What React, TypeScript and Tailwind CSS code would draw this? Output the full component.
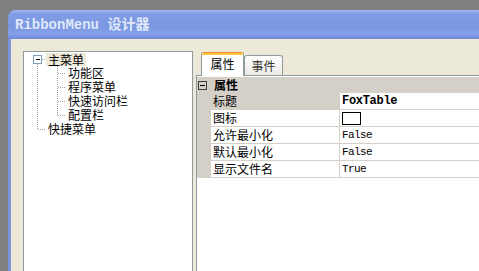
import React from "react";

const cjk = { fontFamily: '"Noto Sans CJK SC", "Noto Sans CJK JP", sans-serif' };
const mono = { fontFamily: '"Liberation Mono", "Noto Sans CJK SC", monospace' };

const DOT = "#a0a0a0";

// dotted connector drawn for one 14px tree row
const Connector = ({
  width,
  lines,
}: {
  width: number;
  lines: { x1: number; y1: number; x2: number; y2: number }[];
}) => (
  <svg width={width} height={14} className="shrink-0" shapeRendering="crispEdges">
    {lines.map((l, i) => (
      <line
        key={i}
        x1={l.x1}
        y1={l.y1}
        x2={l.x2}
        y2={l.y2}
        stroke={DOT}
        strokeWidth={1}
        strokeDasharray="1 1"
      />
    ))}
  </svg>
);

const children = ["功能区", "程序菜单", "快速访问栏", "配置栏"];

const TreePanel = () => (
  <div className="w-[170px] h-[240px] shrink-0 border border-[#919b9c] bg-white text-[12px] leading-[14px] text-black" style={cjk}>
    <div className="flex items-center h-[14px]">
      <svg width={22} height={14} className="shrink-0" shapeRendering="crispEdges">
        <rect x={9.5} y={3.5} width={8} height={8} fill="#fff" stroke="#7f9db9" />
        <line x1={11.5} y1={7.5} x2={15.5} y2={7.5} stroke="#000" />
        <line x1={18} y1={7.5} x2={22} y2={7.5} stroke={DOT} strokeDasharray="1 1" />
        <line x1={13.5} y1={12} x2={13.5} y2={14} stroke={DOT} strokeDasharray="1 1" />
      </svg>
      <span className="px-[2px] h-[13px] bg-[#ece9d8]">主菜单</span>
    </div>
    {children.map((name, i) => {
      const last = i === children.length - 1;
      return (
        <div key={name} className="flex items-center h-[14px]">
          <Connector
            width={42}
            lines={[
              { x1: 13.5, y1: 0, x2: 13.5, y2: 14 },
              { x1: 33.5, y1: 0, x2: 33.5, y2: last ? 7.5 : 14 },
              { x1: 34, y1: 7.5, x2: 42, y2: 7.5 },
            ]}
          />
          <span className="px-[2px]">{name}</span>
        </div>
      );
    })}
    <div className="flex items-center h-[14px]">
      <Connector
        width={22}
        lines={[
          { x1: 13.5, y1: 0, x2: 13.5, y2: 7.5 },
          { x1: 14, y1: 7.5, x2: 22, y2: 7.5 },
        ]}
      />
      <span className="px-[2px]">快捷菜单</span>
    </div>
  </div>
);

const rows = [
  { name: "标题", value: "FoxTable", bold: true, selected: true },
  { name: "图标", value: "", icon: true },
  { name: "允许最小化", value: "False" },
  { name: "默认最小化", value: "False" },
  { name: "显示文件名", value: "True" },
];

const PropertyGrid = () => (
  <div className="text-[12px] text-black">
    <div className="h-[16px] flex items-center bg-[#d4d0c8]">
      <div className="ml-[1px] w-[9px] h-[9px] border border-[#404040] flex items-center justify-center">
        <div className="w-[5px] h-px bg-black" />
      </div>
      <span className="ml-[7px] font-bold leading-[16px]" style={cjk}>
        属性
      </span>
    </div>
    {rows.map((r) => (
      <div key={r.name} className="flex h-[17px]">
        <div className="w-[14px] shrink-0 bg-[#d4d0c8]" />
        <div
          className={`w-[129px] shrink-0 border-r border-b border-[#d4d0c8] pl-[2px] leading-[16px] ${
            r.selected ? "bg-[#d4d0c8]" : "bg-white"
          }`}
          style={cjk}
        >
          {r.name}
        </div>
        <div className="flex-1 border-b border-[#d4d0c8] pl-[2px] flex items-center bg-white">
          {r.icon ? (
            <div className="w-[19px] h-[13px] border border-black bg-white" />
          ) : (
            <span
              className={
                r.bold
                  ? "text-[12px] font-bold tracking-[-0.3px]"
                  : "text-[11px] tracking-[-0.6px]"
              }
              style={mono}
            >
              {r.value}
            </span>
          )}
        </div>
      </div>
    ))}
  </div>
);

const TabPanel = () => (
  <div className="flex-1 flex flex-col min-w-0">
    <div className="h-[24px] flex items-end pl-[5px]">
      <div className="relative z-10 mb-[-1px] w-[43px] h-[24px] bg-white border-x border-[#919b9c] rounded-t-[3px] overflow-hidden flex flex-col">
        <div className="h-[1px] bg-[#e68b2c]" />
        <div className="h-[2px] bg-[#ffc83c]" />
        <div className="flex-1 flex items-center justify-center text-[12px] text-black pb-[3px]" style={cjk}>
          属性
        </div>
      </div>
      <div className="w-[39px] h-[20px] border border-b-0 border-[#919b9c] rounded-t-[3px] bg-gradient-to-b from-white to-[#ecebe6] flex items-center justify-center text-[12px] text-[#333]" style={cjk}>
        事件
      </div>
    </div>
    <div className="flex-1 border-t border-l border-[#919b9c] bg-white pt-[1px]">
      <PropertyGrid />
    </div>
  </div>
);

export default function App() {
  return (
    <div className="w-[479px] h-[271px] overflow-hidden bg-[#7f7f7f] pt-[10px] pl-[8px]">
      <div className="h-full flex flex-col rounded-tl-[8px] overflow-hidden bg-[#7d93dc]">
        <div className="h-[29px] shrink-0 flex items-center pl-[7px] bg-[linear-gradient(to_bottom,#a3b8f2_0%,#819ce4_14%,#7b97e1_60%,#86a1e9_82%,#6f88d5_100%)]">
          <span className="text-[14px] font-bold text-[#dfe8fb] leading-none" style={mono}>
            RibbonMenu 设计器
          </span>
        </div>
        <div className="flex-1 ml-[3px] bg-[#ece9d8] pl-[12px] pt-[12px] flex gap-[3px] overflow-hidden">
          <TreePanel />
          <TabPanel />
        </div>
      </div>
    </div>
  );
}
